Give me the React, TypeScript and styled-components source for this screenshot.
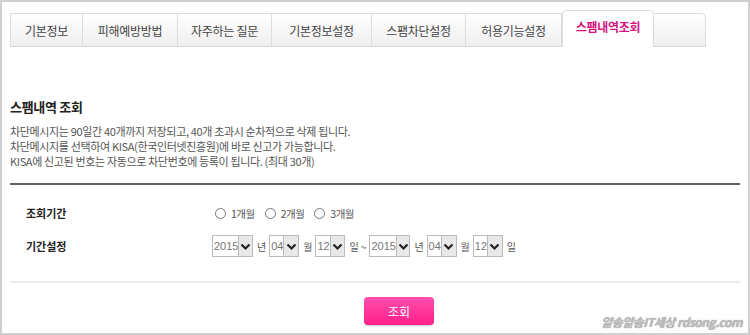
import styled, { createGlobalStyle } from 'styled-components';

const GlobalStyle = createGlobalStyle`
  html, body { margin: 0; padding: 0; background: #fff; }
  body { font-family: "Noto Sans CJK KR", "Noto Sans", sans-serif; }
`;

const Frame = styled.div`
  position: relative;
  box-sizing: border-box;
  width: 750px;
  height: 335px;
  border: 2px solid #cfcfcf;
  padding: 8px 8px 0 8px;
  overflow: hidden;
`;

const TabBar = styled.div`
  display: flex;
  align-items: flex-end;
  height: 37px;
  width: 696px;
`;

const Tab = styled.div<{ $w: number; $active?: boolean; $last?: boolean }>`
  box-sizing: border-box;
  width: ${({ $w }) => $w}px;
  height: ${({ $active }) => ($active ? 37 : 34)}px;
  display: flex;
  align-items: center;
  justify-content: center;
  padding-bottom: ${({ $active }) => ($active ? 6 : 0)}px;
  font-size: 12px;
  letter-spacing: -0.3px;
  color: ${({ $active }) => ($active ? '#d4157f' : '#444')};
  font-weight: ${({ $active }) => ($active ? 700 : 400)};
  background: ${({ $active }) => ($active ? '#fff' : 'linear-gradient(#ffffff, #efefef)')};
  border: 1px solid #dcdcdc;
  border-left: ${({ $active }) => ($active ? '1px solid #dcdcdc' : 'none')};
  border-bottom: ${({ $active }) => ($active ? 'none' : '1px solid #d6d6d6')};
  border-radius: ${({ $active, $last }) => ($active ? '5px 5px 0 0' : $last ? '0 5px 0 0' : '0')};
  &:first-child { border-left: 1px solid #dcdcdc; }
`;

const Body = styled.div`
  padding-top: 50px;
`;

const Heading = styled.h2`
  margin: 0 0 8px 0;
  font-size: 13px;
  font-weight: 700;
  color: #222;
  letter-spacing: -0.3px;
`;

const Note = styled.p`
  margin: 0;
  font-size: 11px;
  line-height: 15px;
  color: #555;
  letter-spacing: -0.35px;
`;

const Divider = styled.div<{ $dark?: boolean }>`
  width: 730px;
  height: 2px;
  background: ${({ $dark }) => ($dark ? '#5f5f5f' : '#ececec')};
  margin-top: ${({ $dark }) => ($dark ? 14 : 24)}px;
`;

const FormRow = styled.div<{ $top: number }>`
  display: flex;
  align-items: center;
  margin-top: ${({ $top }) => $top}px;
  height: 22px;
`;

const Label = styled.div`
  width: 186px;
  padding-left: 16px;
  font-size: 11px;
  font-weight: 700;
  color: #222;
`;

const RadioItem = styled.label`
  display: flex;
  align-items: center;
  gap: 5px;
  margin-right: 7px;
  font-size: 10.5px;
  color: #555;
  letter-spacing: -0.5px;
`;

const RadioCircle = styled.span`
  box-sizing: border-box;
  width: 11px;
  height: 11px;
  border-radius: 50%;
  border: 1px solid #777;
  background: #fff;
  margin-left: 3px;
`;

const Select = styled.div<{ $w: number }>`
  box-sizing: border-box;
  display: flex;
  width: ${({ $w }) => $w}px;
  height: 22px;
  border: 1px solid #bbb;
  background: #fff;
`;

const SelectValue = styled.span`
  flex: 1;
  display: flex;
  align-items: center;
  padding-left: 1px;
  font-family: "Liberation Sans", Arial, sans-serif;
  font-size: 11px;
  color: #777;
`;

const SelectArrow = styled.span`
  box-sizing: border-box;
  width: 16px;
  border-left: 1px solid #bbb;
  background: #e8e8e8;
  display: flex;
  align-items: center;
  justify-content: center;
`;

const Unit = styled.span`
  font-size: 10px;
  color: #555;
  margin: 0 3px 0 4px;
  white-space: nowrap;
`;

const ButtonRow = styled.div`
  display: flex;
  justify-content: center;
  margin-top: 14px;
  padding-left: 48px;
`;

const SearchButton = styled.button`
  width: 70px;
  height: 28px;
  border: none;
  border-radius: 4px;
  background: linear-gradient(#ff4fae, #ff1f8a);
  color: #fff;
  font-family: "Noto Sans CJK KR", sans-serif;
  font-size: 12px;
  box-shadow: 0 1px 1px rgba(0, 0, 0, 0.2);
`;

const Watermark = styled.div`
  position: absolute;
  right: 6px;
  bottom: 3px;
  font-family: "Noto Sans CJK KR", sans-serif;
  font-size: 12px;
  font-style: italic;
  font-weight: 700;
  color: #bdbdbd;
  letter-spacing: -0.5px;
  text-shadow: 0 0 1px #888;
`;

const tabs = [
  { label: '기본정보', w: 73 },
  { label: '피해예방방법', w: 95 },
  { label: '자주하는 질문', w: 94 },
  { label: '기본정보설정', w: 100 },
  { label: '스팸차단설정', w: 94 },
  { label: '허용기능설정', w: 96 },
  { label: '스팸내역조회', w: 92, active: true },
  { label: '', w: 52, last: true },
];

const Arrow = () => (
  <svg width="11" height="9" viewBox="0 0 11 9">
    <path d="M1.5 2.5 L5.5 6.5 L9.5 2.5" fill="none" stroke="#222" strokeWidth="2.2" />
  </svg>
);

const DateSelect = ({ value, w }: { value: string; w: number }) => (
  <Select $w={w}>
    <SelectValue>{value}</SelectValue>
    <SelectArrow>
      <Arrow />
    </SelectArrow>
  </Select>
);

export default function App() {
  return (
    <>
      <GlobalStyle />
      <Frame>
        <TabBar>
          {tabs.map((t, i) => (
            <Tab key={i} $w={t.w} $active={t.active} $last={t.last}>
              {t.label}
            </Tab>
          ))}
        </TabBar>
        <Body>
          <Heading>스팸내역 조회</Heading>
          <Note>차단메시지는 90일간 40개까지 저장되고, 40개 초과시 순차적으로 삭제 됩니다.</Note>
          <Note>차단메시지를 선택하여 KISA(한국인터넷진흥원)에 바로 신고가 가능합니다.</Note>
          <Note>KISA에 신고된 번호는 자동으로 차단번호에 등록이 됩니다. (최대 30개)</Note>
          <Divider $dark />
          <FormRow $top={17}>
            <Label>조회기간</Label>
            <RadioItem><RadioCircle />1개월</RadioItem>
            <RadioItem><RadioCircle />2개월</RadioItem>
            <RadioItem><RadioCircle />3개월</RadioItem>
          </FormRow>
          <FormRow $top={11}>
            <Label>기간설정</Label>
            <DateSelect value="2015" w={41} />
            <Unit>년</Unit>
            <DateSelect value="04" w={30} />
            <Unit>월</Unit>
            <DateSelect value="12" w={30} />
            <Unit>일 ~</Unit>
            <DateSelect value="2015" w={41} />
            <Unit>년</Unit>
            <DateSelect value="04" w={30} />
            <Unit>월</Unit>
            <DateSelect value="12" w={30} />
            <Unit>일</Unit>
          </FormRow>
          <Divider />
          <ButtonRow>
            <SearchButton>조회</SearchButton>
          </ButtonRow>
        </Body>
        <Watermark>얄송얄송IT세상 rdsong.com</Watermark>
      </Frame>
    </>
  );
}
